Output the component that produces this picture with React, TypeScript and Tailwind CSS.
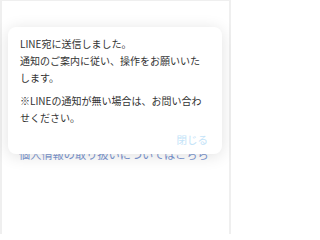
import React from "react";

export default function App() {
  const jp = { fontFamily: '"Noto Sans CJK JP", "Noto Sans", sans-serif' };
  return (
    <div className="relative w-[231px] h-[234px] bg-[#ececec] overflow-hidden" style={jp}>
      <div className="absolute left-[2px] right-[2px] top-[1px] bottom-0 bg-white">
        <div className="pt-[145px] pl-[17px] text-[11.2px] leading-[16px] text-[#5a7cc6] whitespace-nowrap">
          個人情報の取り扱いについてはこちら
        </div>
      </div>
      <div className="absolute inset-0 bg-white/20">
        <div className="absolute left-[8px] top-[27px] w-[214px] h-[127px] rounded-[8px] bg-white shadow-[0_2px_16px_rgba(0,0,0,0.12)] pl-[12px] pr-[10px] pt-[8px]">
          <div className="w-[186px] text-[10px] leading-[17px] text-[#333333]">
            <p>LINE宛に送信しました。</p>
            <p>通知のご案内に従い、操作をお願いいたします。</p>
            <p className="mt-[6px]">※LINEの通知が無い場合は、お問い合わせください。</p>
          </div>
          <div className="flex justify-end pr-[4px] mt-[5px]">
            <span className="text-[10.5px] leading-[17px] text-[#c3e3f8]">閉じる</span>
          </div>
        </div>
      </div>
    </div>
  );
}
